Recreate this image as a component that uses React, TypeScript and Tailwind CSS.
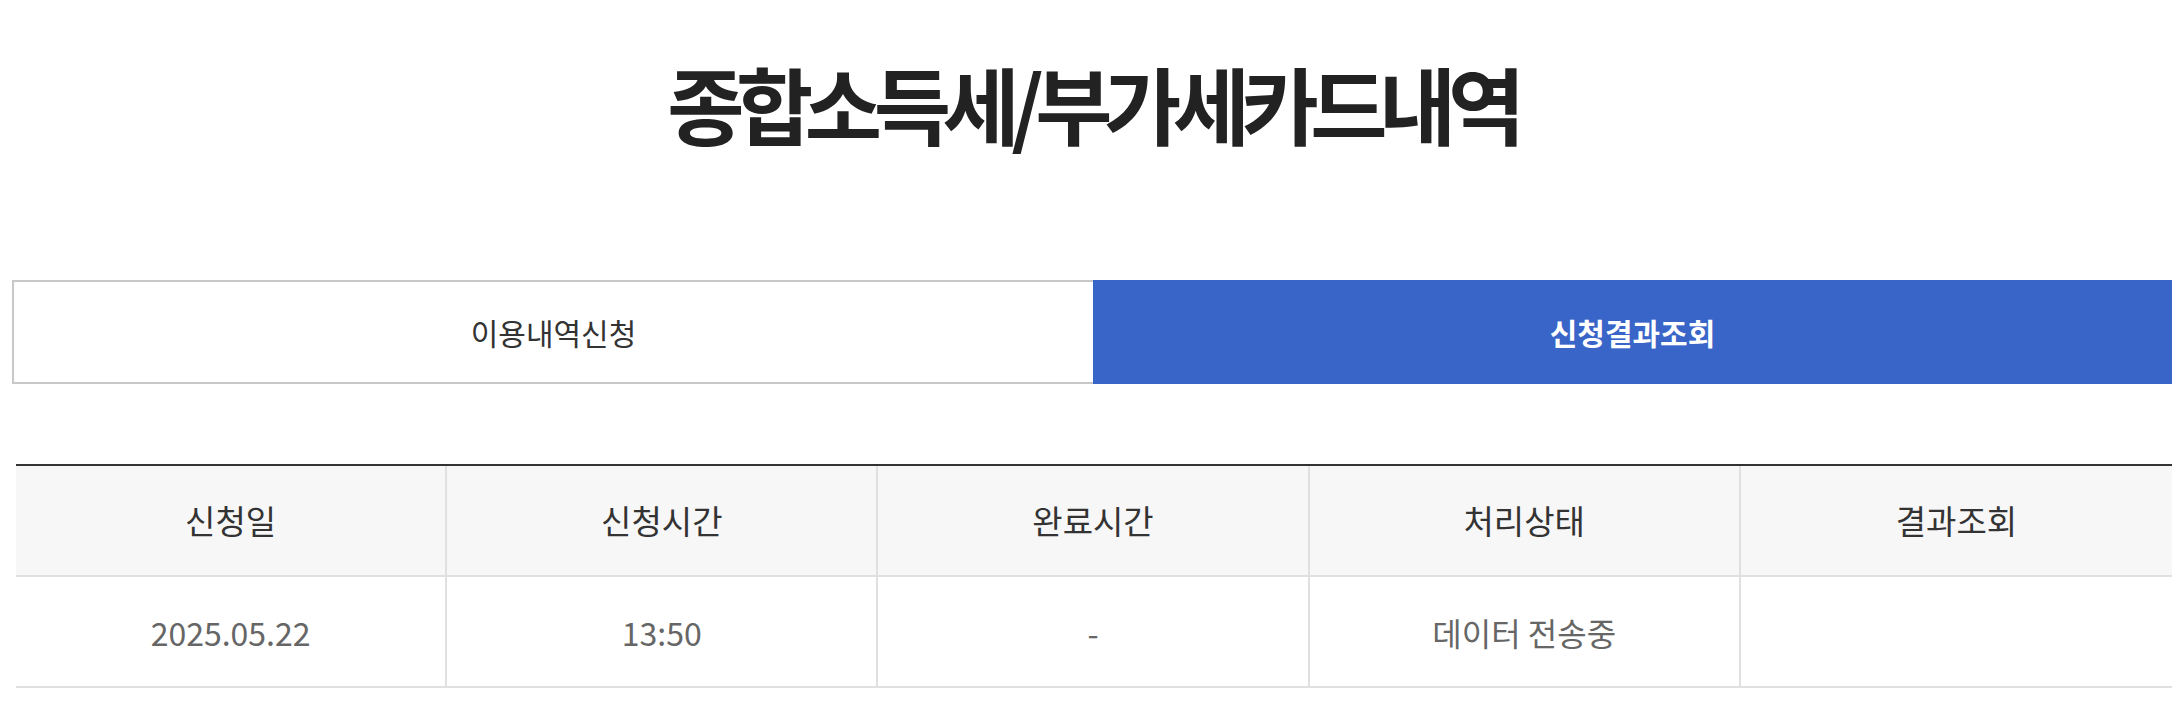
import React from "react";

const heads = ["신청일", "신청시간", "완료시간", "처리상태", "결과조회"];

export default function App() {
  return (
    <div className="w-[2184px] min-h-[724px] bg-white font-['Noto_Sans_CJK_KR','Noto_Sans',sans-serif]">
      <div className="h-[206px] flex items-center justify-center">
        <h1 className="text-[84px] leading-none font-bold text-[#222] tracking-[-8.5px]">
          종합소득세/부가세카드내역
        </h1>
      </div>
      <div className="mt-[74px] ml-[12px] mr-[12px] flex h-[104px]">
        <div className="flex-1 border-2 border-r-0 border-[#c8c8c8] flex items-center justify-center text-[30px] text-[#333]">
          이용내역신청
        </div>
        <div className="flex-1 bg-[#3964c8] flex items-center justify-center text-[30px] font-bold text-white">
          신청결과조회
        </div>
      </div>
      <div className="mt-[80px] ml-[16px] mr-[12px] border-t-2 border-[#333]">
        <div className="grid grid-cols-5 h-[111px] bg-[#f7f7f7] border-b-2 border-[#e0e0e0]">
          {heads.map((h, i) => (
            <div
              key={h}
              className={
                "flex items-center justify-center text-[33px] text-[#333] " +
                (i < 4 ? "border-r-2 border-[#e0e0e0]" : "")
              }
            >
              {h}
            </div>
          ))}
        </div>
        <div className="grid grid-cols-5 h-[111px] border-b-2 border-[#e0e0e0]">
          <div className="flex items-center justify-center text-[32px] text-[#666] border-r-2 border-[#e0e0e0]">
            2025.05.22
          </div>
          <div className="flex items-center justify-center text-[32px] text-[#666] border-r-2 border-[#e0e0e0]">
            13:50
          </div>
          <div className="flex items-center justify-center text-[32px] text-[#666] border-r-2 border-[#e0e0e0]">
            -
          </div>
          <div className="flex items-center justify-center text-[32px] text-[#666] border-r-2 border-[#e0e0e0]">
            데이터 전송중
          </div>
          <div className="flex items-center justify-center text-[32px] text-[#666]"></div>
        </div>
      </div>
    </div>
  );
}
